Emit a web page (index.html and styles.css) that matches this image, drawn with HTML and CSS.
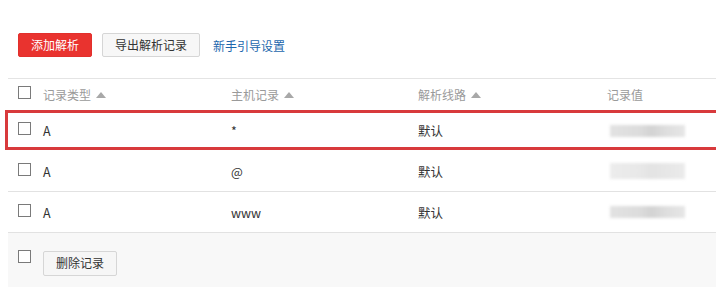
FILE: index.html
```html
<!DOCTYPE html>
<html lang="zh-CN">
<head>
<meta charset="utf-8">
<link rel="stylesheet" href="styles.css">
</head>
<body>
<div class="page">
  <div class="toolbar">
    <button class="btn btn-primary">添加解析</button>
    <button class="btn btn-default">导出解析记录</button>
    <a class="link" href="#">新手引导设置</a>
  </div>
  <div class="table">
    <div class="row head">
      <div class="cell check"><span class="box"></span></div>
      <div class="cell">记录类型<span class="arrow"></span></div>
      <div class="cell">主机记录<span class="arrow"></span></div>
      <div class="cell">解析线路<span class="arrow"></span></div>
      <div class="cell">记录值</div>
    </div>
    <div class="row body highlight">
      <div class="cell check"><span class="box"></span></div>
      <div class="cell">A</div>
      <div class="cell">*</div>
      <div class="cell">默认</div>
      <div class="cell"><span class="blur"></span></div>
    </div>
    <div class="row body">
      <div class="cell check"><span class="box"></span></div>
      <div class="cell">A</div>
      <div class="cell">@</div>
      <div class="cell">默认</div>
      <div class="cell"><span class="blur light"></span></div>
    </div>
    <div class="row body">
      <div class="cell check"><span class="box"></span></div>
      <div class="cell">A</div>
      <div class="cell">www</div>
      <div class="cell">默认</div>
      <div class="cell"><span class="blur"></span></div>
    </div>
    <div class="footer">
      <span class="box"></span>
      <button class="btn btn-default btn-del">删除记录</button>
    </div>
  </div>
</div>
</body>
</html>
```

FILE: styles.css
```css
* { box-sizing: border-box; }
html, body { margin: 0; padding: 0; background: #fff; }
body {
  font-family: "Noto Sans CJK SC", "Noto Sans", "Liberation Sans", sans-serif;
  font-size: 12px;
  color: #333;
  width: 716px;
  height: 297px;
  overflow: hidden;
}
.page { padding-top: 33px; }
.toolbar {
  display: flex;
  align-items: center;
  padding-left: 18px;
  height: 24px;
  gap: 10px;
}
.btn {
  font-family: inherit;
  font-size: 12px;
  height: 24px;
  padding: 0 12px;
  border-radius: 2px;
  line-height: 22px;
  cursor: pointer;
}
.btn-primary {
  width: 74px;
  background: #e9332f;
  border: 1px solid #e2302c;
  color: #fff;
}
.btn-default {
  width: 98px;
  background: #f7f7f7;
  border: 1px solid #d6d6d6;
  color: #333;
}
.link {
  color: #1c67ad;
  text-decoration: none;
  margin-left: 3px;
}
.table {
  margin-top: 21px;
  margin-left: 8px;
  border-top: 1px solid #e4e4e4;
}
.row {
  display: grid;
  grid-template-columns: 35px 188px 187px 189px 1fr;
  align-items: center;
  position: relative;
}
.row.head { height: 31px; color: #9a9a9a; }
.row.body { height: 41px; border-bottom: 1px solid #e2e2e2; color: #333; }
.row.body.highlight { border-bottom: none; height: 41px; }
.cell { display: flex; align-items: center; white-space: nowrap; }
.cell.check { padding-left: 10px; }
.box {
  display: inline-block;
  width: 13px;
  height: 13px;
  border: 1px solid #7a7a7a;
  background: #fff;
  margin-top: -4px;
}
.arrow {
  display: inline-block;
  width: 0;
  height: 0;
  margin-left: 5px;
  border-left: 5px solid transparent;
  border-right: 5px solid transparent;
  border-bottom: 6px solid #a8a8a8;
}
.row.body .cell { font-size: 12.5px; }
.blur {
  display: inline-block;
  width: 75px;
  height: 12px;
  margin-left: 3px;
  background: linear-gradient(90deg, #e2e2e2 0%, #dcdcdc 40%, #d3d3d3 55%, #dedede 75%, #e6e6e6 100%);
  filter: blur(1.5px);
}
.blur.light {
  height: 16px;
  background: linear-gradient(90deg, #ececec 0%, #e8e8e8 40%, #e3e3e3 55%, #ebebeb 100%);
}
.highlight::after {
  content: "";
  position: absolute;
  left: -3px;
  top: 0;
  right: -10px;
  bottom: 1px;
  border: 3px solid #d83a3c;
  pointer-events: none;
}
.footer {
  background: #f8f8f8;
  height: 54px;
  display: flex;
  align-items: center;
  padding-left: 10px;
  gap: 12px;
}
.footer .box { margin-top: -8px; }
.btn-del { width: 74px; height: 25px; margin-top: 6px; background: #f6f6f6; }
```
